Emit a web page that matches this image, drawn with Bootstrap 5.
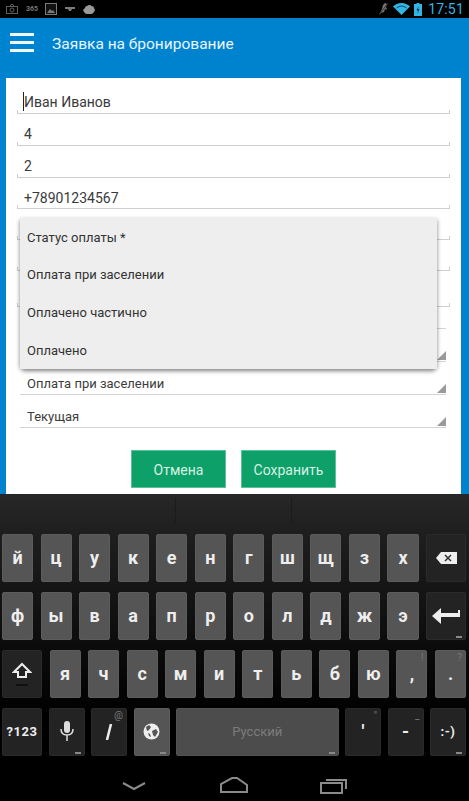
<!DOCTYPE html>
<html lang="ru">
<head>
    <meta charset="UTF-8">
    <meta name="viewport" content="width=device-width, initial-scale=1.0">
    <title>Заявка на бронирование</title>
    <link href="https://cdn.jsdelivr.net/npm/bootstrap@5.3.0/dist/css/bootstrap.min.css" rel="stylesheet">
    <style>
        html, body { width: 469px; height: 801px; overflow: hidden; background: #000; }
        body { font-family: Roboto, "Liberation Sans", sans-serif; }
        .screen { width: 469px; height: 801px; }

        /* status bar */
        .status-bar { height: 18px; background: #000; padding: 0 5px 0 6px; flex: none; }
        .status-bar svg { display: block; }
        .st-365 { font-size: 7px; font-weight: 700; color: #777; line-height: 1; width: 12px; margin-left: 8px; margin-right: 7px; }
        .st-time { font-size: 14px; color: #33b5e5; line-height: 1; margin-left: 6px; letter-spacing: .2px; }

        /* blue area */
        .app-area { height: 476px; background: #0083cf; padding: 0 8px 0 6px; flex: none; }
        .app-top { height: 60px; padding: 0 0 6px 4px; }
        .burger { width: 24px; margin-right: 18px; margin-bottom: 6px; }
        .burger span { display: block; height: 3px; background: #eef7fc; margin-bottom: 5px; }
        .burger span:last-child { margin-bottom: 0; }
        .app-title { font-size: 15.5px; color: #e9f5fb; }

        /* form */
        .form-sheet { height: 416px; border: 0; border-radius: 0; background: #fff; padding: 4px 11px 0; position: relative; }
        .fld { height: 31.8px; border-bottom: 1px solid #cfcfcf; position: relative; padding-left: 7px; font-size: 14px; color: #3a3a3a; line-height: 20px; padding-top: 10px; }
        .fld:first-child { height: 32px; }
        .fld::before, .fld::after { content: ""; position: absolute; bottom: 0; width: 1px; height: 3px; background: #cfcfcf; }
        .fld::before { left: 0; }
        .fld::after { right: 0; }
        .fld-low { height: 31px; }
        .fld-gap { height: 36px; }
        .caret-line { position: absolute; left: 6px; top: 10px; width: 1px; height: 19px; background: #222; }
        .pick { height: 33px; margin: 0 4px 0 3px; border-bottom: 1px solid #d4d4d4; position: relative; font-size: 13px; color: #3c3c3c; padding-left: 7px; padding-top: 14px; line-height: 16px; }
        .pick-short { height: 22px; }
        .pick:not(.pick-short)::after { content: ""; position: absolute; right: 0; bottom: 1px; border-style: solid; border-width: 0 0 9px 9px; border-color: transparent transparent #9a9a9a transparent; }
        .btn-row { gap: 15px; margin-top: 22px; }
        .btn-green { width: 95px; height: 38px; border: 1px solid #5cc09b; border-radius: 0; background: #0da068; color: #d6f0e4; font-size: 14px; padding: 0; line-height: 38px; }

        /* open select menu */
        .menu-drop { position: absolute; left: 14px; top: 140px; width: 417px; border-radius: 0; box-shadow: 0 2px 4px rgba(0, 0, 0, .5); background: #eee; }
        .menu-drop .list-group-item { height: 37.7px; border: 0; border-radius: 0; background: #eee; color: #333; font-size: 13px; line-height: 16px; padding: 11.5px 7px; }

        /* keyboard */
        .kbd { height: 262px; flex: none; background: linear-gradient(#272727 0, #1f1f1f 36px, #161616 91px, #0c0c0c 149px, #000 226px); }
        .suggest { height: 40px; padding-top: 4px; }
        .suggest div { width: 116px; height: 25px; border-right: 1px solid #1b1b1b; }
        .suggest div:first-child { width: 176px; }
        .kb-rows { padding: 0 3px 0 2px; gap: 10.5px; }
        .kb-row { height: 47.5px; gap: 7.5px; }
        .kb-row.last { gap: 6.5px; }
        .ky { flex: 1 1 0; min-width: 0; background: #555; border: 1px solid #5c5c5c; border-radius: 2px; color: #eee; font-size: 18px; font-weight: 700; position: relative; line-height: 1; }
        .ky-dark { background: #232323; border-color: #2a2a2a; }
        .ky-40 { flex: 0 0 40px; }
        .ky-36 { flex: 0 0 36px; }
        .ky-space { background: #4c4c4c; border-color: #525252; color: #7c7c7c; font-size: 13px; font-weight: 400; }
        .ky-sym { font-size: 13px; letter-spacing: .5px; }
        .hint { position: absolute; right: 3px; top: 1px; font-size: 10px; font-weight: 400; color: #777; line-height: 12px; }
        .dots { position: absolute; right: 3px; bottom: 1px; width: 6px; height: 2px; background: #888; }

        /* nav bar */
        .nav-bar { height: 45px; background: #000; flex: none; position: relative; }
        .nav-bar svg { position: absolute; }
        .nb-back { left: 121px; top: 25px; }
        .nb-home { left: 219px; top: 21px; }
        .nb-recent { left: 320px; top: 22px; }
    </style>
</head>
<body>
    <div class="screen d-flex flex-column">

        <div class="status-bar d-flex align-items-center">
            <svg width="12" height="10" viewBox="0 0 12 10" fill="none" stroke="#5f5f5f"><rect x=".5" y="2.5" width="11" height="7"/><circle cx="6" cy="6" r="2"/><path d="M4 2.500 5 .5h2l1 2"/></svg>
            <span class="st-365">365</span>
            <svg width="12" height="12" viewBox="0 0 12 12"><rect x=".5" y=".5" width="11" height="11" fill="#111" stroke="#7a7a7a"/><path d="M2 10 5 6l2 2 1-1 2 3z" fill="#7a7a7a"/></svg>
            <svg class="ms-2" width="10" height="5" viewBox="0 0 10 5"><path d="M0 0h10v2H7L6 4H4L3 2H0z" fill="#7a7a7a"/></svg>
            <svg class="ms-2" width="12" height="9" viewBox="0 0 12 9"><path d="M2 3q0-2 2-2 1-1 2.500-1Q8 0 8.500 1 11 1 11 3l1 2-1 2q-1 2-3 2H4Q2 9 1 7L0 5z" fill="#999"/></svg>
            <svg class="ms-auto" width="11" height="14" viewBox="0 0 11 14"><path d="M1 13 4 7l1-4 2-2 2 1-1 3 1 3-2-1-1 3-3 1z" fill="#777"/><path d="M1 13 10 1" stroke="#333"/></svg>
            <svg class="ms-1" width="17" height="12" viewBox="0 0 17 12"><path d="M8.500 12 0 3.500Q3.500 0 8.500 0T17 3.500z" fill="#33b5e5"/><path d="M3.500 5Q6 3 8.500 3T13.500 5" fill="none" stroke="#0b4a63"/></svg>
            <svg class="ms-1" width="8" height="13" viewBox="0 0 8 13"><path d="M2.500 0h3v1H8v12H0V1h2.500z" fill="#33b5e5"/><path d="M4.500 3 2.500 7.500h1.500L3.500 11 5.500 6H4z" fill="#0b3344"/></svg>
            <span class="st-time">17:51</span>
        </div>

        <div class="app-area d-flex flex-column">
            <div class="app-top d-flex align-items-center">
                <div class="burger"><span></span><span></span><span></span></div>
                <div class="app-title">Заявка на бронирование</div>
            </div>
            <div class="card form-sheet">
                <div class="fld"><span class="caret-line"></span>Иван Иванов</div>
                <div class="fld">4</div>
                <div class="fld">2</div>
                <div class="fld">+78901234567</div>
                <div class="fld fld-low"></div>
                <div class="fld fld-low"></div>
                <div class="fld fld-gap"></div>
                <div class="pick pick-short"></div>
                <div class="pick"></div>
                <div class="pick">Оплата при заселении</div>
                <div class="pick">Текущая</div>
                <div class="btn-row d-flex justify-content-center">
                    <button type="button" class="btn btn-green">Отмена</button>
                    <button type="button" class="btn btn-green">Сохранить</button>
                </div>
                <div class="list-group menu-drop">
                    <div class="list-group-item">Статус оплаты *</div>
                    <div class="list-group-item">Оплата при заселении</div>
                    <div class="list-group-item">Оплачено частично</div>
                    <div class="list-group-item">Оплачено</div>
                </div>
            </div>
        </div>

        <div class="kbd d-flex flex-column">
            <div class="suggest d-flex"><div></div><div></div></div>
            <div class="kb-rows d-flex flex-column" id="keys"></div>
        </div>

        <div class="nav-bar">
            <svg class="nb-back" width="26" height="12" viewBox="0 0 26 12" fill="none" stroke="#8a8a8a" stroke-width="2"><path d="M2 2 13 8 24 2"/></svg>
            <svg class="nb-home" width="30" height="16" viewBox="0 0 30 16" fill="none" stroke="#8a8a8a" stroke-width="2"><path d="M2 15V7L13 1h5l10 7v7z"/></svg>
            <svg class="nb-recent" width="29" height="16" viewBox="0 0 29 16" fill="none" stroke="#8a8a8a" stroke-width="2"><rect x="1" y="5" width="21" height="10"/><path d="M6 2h20v9"/></svg>
        </div>
    </div>

    <script src="https://cdn.jsdelivr.net/npm/bootstrap@5.3.0/dist/js/bootstrap.bundle.min.js"></script>
    <script>
        const icons = {
            del: '<svg width="21" height="12" viewBox="0 0 21 12"><path d="M5 0h16v12H5L0 6z" fill="#eee"/><path d="M9 3l6 6M15 3l-6 6" stroke="#333" stroke-width="1.500"/></svg>',
            enter: '<svg width="28" height="16" viewBox="0 0 28 16"><path d="M9 0v5h17V2h2v7H9v7L0 8z" fill="#eee"/></svg>',
            shift: '<svg width="20" height="24" viewBox="0 0 20 24"><path d="M10 2 18 10h-4v5H6v-5H2z" fill="none" stroke="#eee" stroke-width="2"/><path d="M4 23h12" stroke="#111" stroke-width="2"/></svg>',
            mic: '<svg width="14" height="21" viewBox="0 0 14 21"><rect x="4" y="0" width="6" height="12" rx="3" fill="#ddd"/><path d="M1 8q0 6 6 6t6-6M7 14v6" fill="none" stroke="#ddd" stroke-width="1.500"/></svg>',
            slash: '<svg width="8" height="16" viewBox="0 0 8 16"><path d="M6 0 2 16" stroke="#eee" stroke-width="2.500"/></svg>',
            globe: '<svg width="17" height="17" viewBox="0 0 17 17"><circle cx="8.500" cy="8.500" r="8" fill="#eee"/><path d="M3 4l3-2 2 2-2 3-2 1zM9 8l4-2 2 3-3 5-2-2zM5 10l2 1 1 3-2-1z" fill="#555"/></svg>'
        };
        const rows = [
            [...'йцукенгшщзх'.split('').map(t => ({ t })), { i: 'del', c: 'ky-dark ky-40' }],
            [...'фывапролджэ'.split('').map(t => ({ t })), { i: 'enter', c: 'ky-dark ky-40', d: 1 }],
            [{ i: 'shift', c: 'ky-dark ky-40' }, ...'ячсмитьбю'.split('').map(t => ({ t })), { t: ',', h: '!' }, { t: '.', h: '?' }],
            [
                { t: '?123', c: 'ky-dark ky-40 ky-sym' },
                { i: 'mic', c: 'ky-dark ky-36', d: 1 },
                { i: 'slash', c: 'ky-dark ky-36', h: '@' },
                { i: 'globe', c: 'ky-36', d: 1 },
                { t: 'Русский', c: 'ky-space', d: 1 },
                { t: "'", c: 'ky-dark ky-36', h: '"' },
                { t: '-', c: 'ky-dark ky-36', h: '_' },
                { t: ':-)', c: 'ky-dark ky-36 ky-sym', d: 1 }
            ]
        ];
        const keysEl = document.getElementById('keys');
        rows.forEach((row, n) => {
            const rowEl = document.createElement('div');
            rowEl.className = 'kb-row d-flex' + (n === 3 ? ' last' : '');
            row.forEach(k => {
                const el = document.createElement('div');
                el.className = 'ky d-flex align-items-center justify-content-center ' + (k.c || '');
                el.innerHTML = (k.i ? icons[k.i] : k.t)
                    + (k.h ? `<span class="hint">${k.h}</span>` : '')
                    + (k.d ? '<span class="dots"></span>' : '');
                rowEl.appendChild(el);
            });
            keysEl.appendChild(rowEl);
        });
    </script>
</body>
</html>
